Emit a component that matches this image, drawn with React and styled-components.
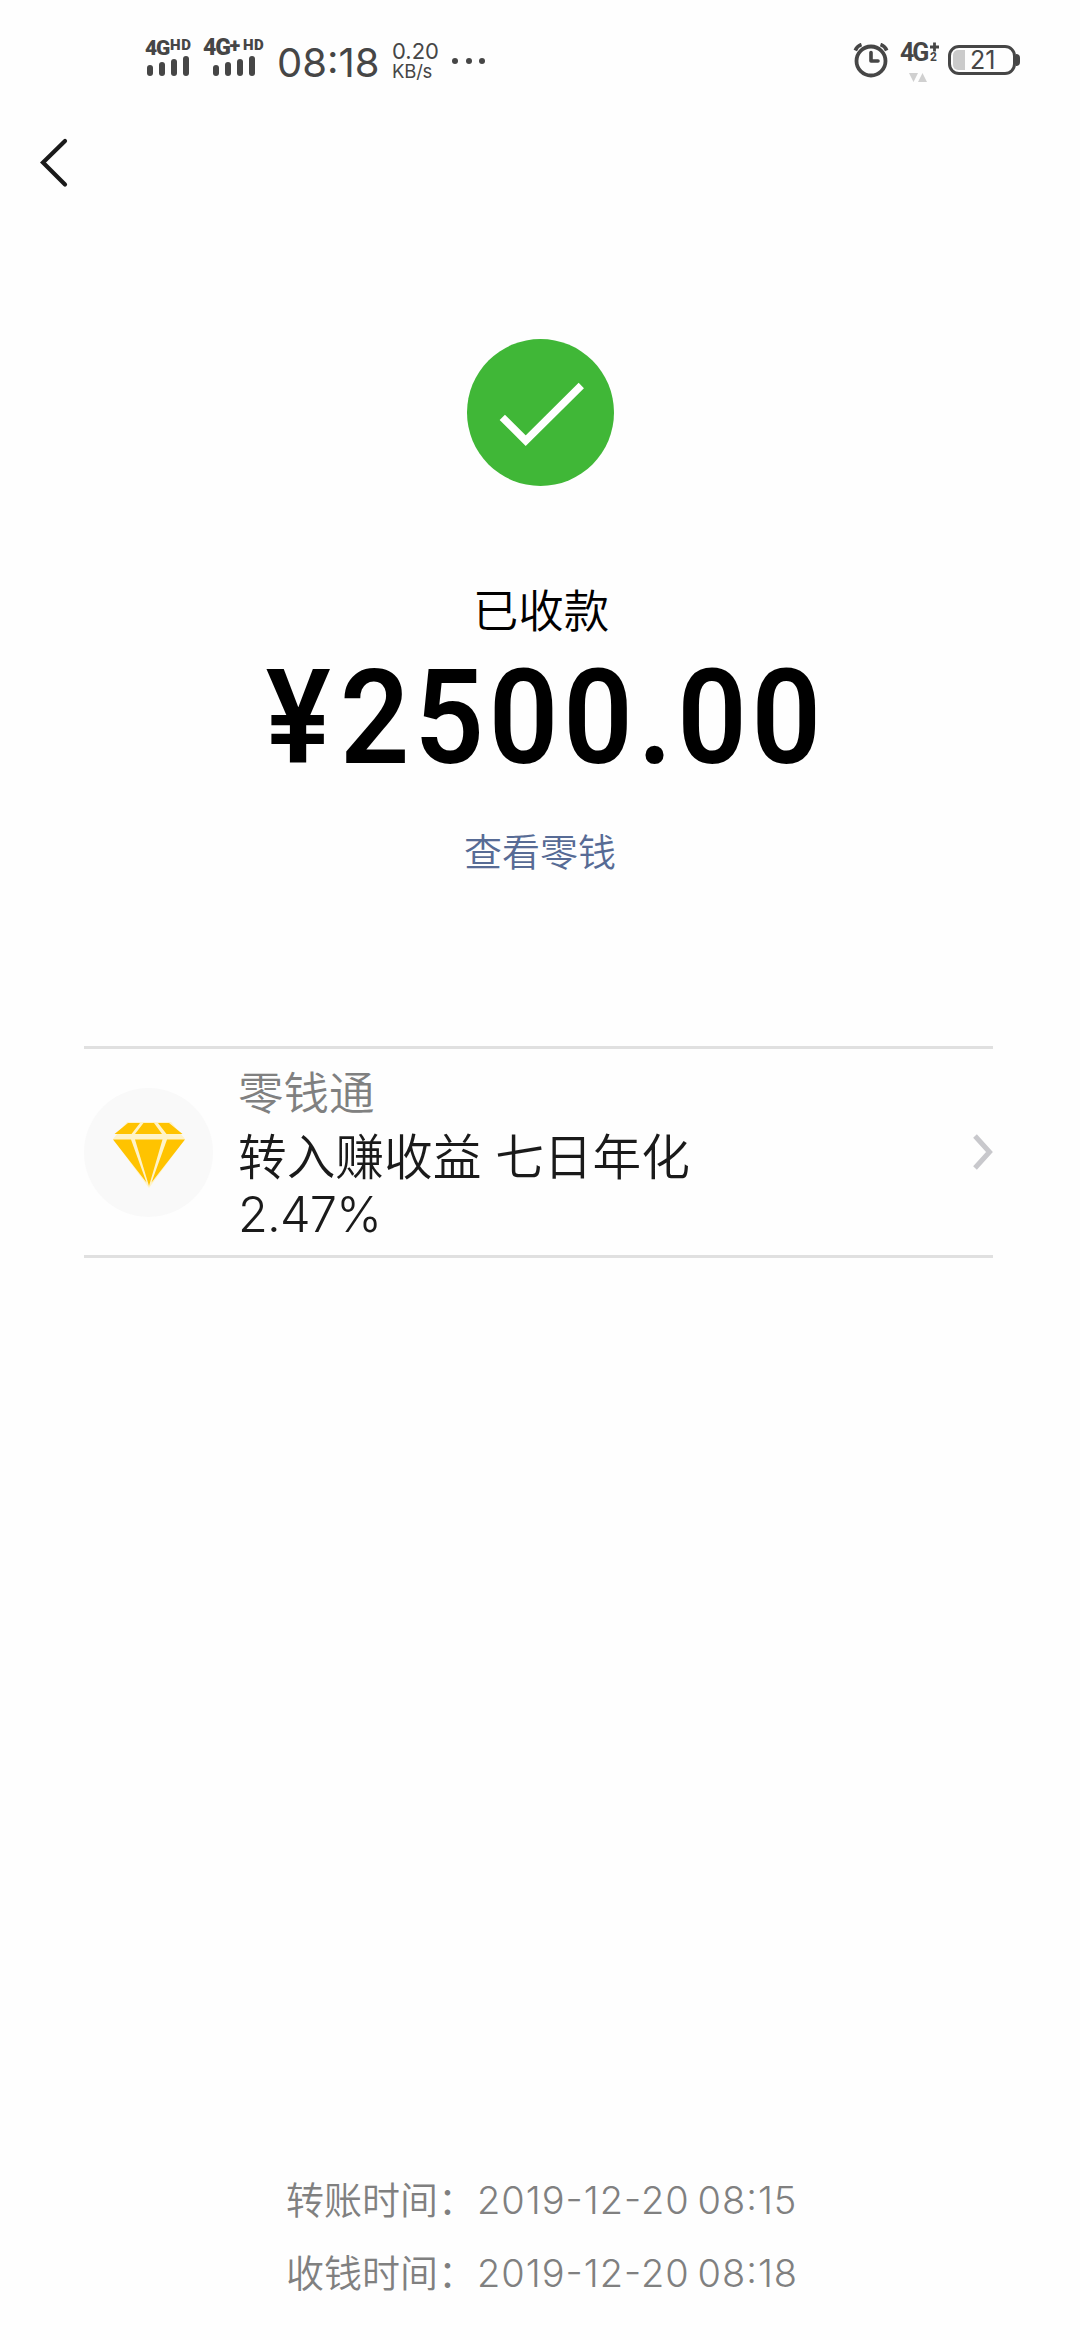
import styled, { createGlobalStyle } from "styled-components"

const GlobalStyle = createGlobalStyle`
    * {
        box-sizing: border-box;
    }
    body {
        margin: 0;
        background: #fefefe;
        font-family: Inter, "Noto Sans CJK SC", sans-serif;
        font-weight: 350;
    }
`

const Screen = styled.div`
    width: 1080px;
    height: 2340px;
    display: flex;
    flex-direction: column;
    background: #fefefe;
    overflow: hidden;
`

const StatusBar = styled.header`
    height: 120px;
    padding: 38px 60px 0 145px;
    display: flex;
    justify-content: space-between;
    color: #464646;
`

const StatusGroup = styled.div`
    display: flex;
    align-items: flex-start;
`

const Signal = styled.div`
    width: ${({width}) => width}px;
    height: 38px;
    display: flex;
    flex-direction: column;
    justify-content: space-between;
`

const NetworkLabel = styled.div`
    height: 18px;
    display: flex;
    align-items: flex-start;
    font-family: Roboto, sans-serif;
    font-weight: 900;
    font-size: ${({size}) => size || 21}px;
    line-height: 20px;
    letter-spacing: -1.2px;
    white-space: nowrap;
`

const NetworkBadge = styled.span`
    font-size: 15px;
    line-height: 14px;
    letter-spacing: 0.6px;
    margin-left: 1px;
`

const NetworkPlus = styled.span`
    font-size: 20px;
    line-height: 14px;
    letter-spacing: 1.6px;
`

const Bars = styled.div`
    display: flex;
    align-items: flex-end;
    gap: 6px;
    padding-left: ${({inset}) => inset}px;
`

const Bar = styled.span`
    width: 6px;
    height: ${({height}) => height}px;
    border-radius: 3px;
    background: #464646;
`

const Clock = styled.div`
    width: 114px;
    padding-top: 5px;
    font-size: 40px;
    font-weight: 400;
    line-height: 40px;
    letter-spacing: 0;
    text-indent: -1px;
`

const Speed = styled.div`
    width: 60px;
    padding-top: 3px;
    font-weight: 400;
    font-size: 22px;
    line-height: 20px;
`

const SpeedUnit = styled.div`
    font-size: 18.5px;
    line-height: 20px;
    letter-spacing: -0.2px;
`

const Dots = styled.div`
    display: flex;
    gap: 7.5px;
    padding-top: 20px;
`

const Dot = styled.span`
    width: 6px;
    height: 6px;
    border-radius: 50%;
    background: #464646;
`

const AlarmWrap = styled.div`
    padding-top: 5px;
`

const Mobile = styled.div`
    width: 59px;
    padding: 4px 0 0 11px;
`

const MobileLabel = styled.div`
    display: flex;
    height: 25px;
    font-family: Roboto, sans-serif;
    font-weight: 700;
    font-size: 25px;
    line-height: 22px;
    letter-spacing: -2.2px;
`

const PlusTwo = styled.div`
    display: flex;
    flex-direction: column;
    margin-left: 3px;
    font-size: 12px;
    line-height: 11px;
    letter-spacing: 0;
`

const BatteryWrap = styled.div`
    display: flex;
    align-items: center;
    padding-top: 7px;
`

const BatteryBody = styled.div`
    width: 68px;
    height: 30px;
    padding: 2px;
    display: flex;
    align-items: center;
    border: 3px solid #464646;
    border-radius: 11px;
    font-weight: 400;
    font-size: 25px;
    line-height: 24px;
`

const BatteryLevel = styled.span`
    width: 12px;
    height: 20px;
    margin-right: 5px;
    border-radius: 5px 0 0 5px;
    background: #cbcbcb;
`

const BatteryTip = styled.span`
    width: 4px;
    height: 12px;
    border-radius: 0 5px 5px 0;
    background: #464646;
`

const NavBar = styled.nav`
    height: 84px;
    padding: 17px 0 0 39px;
`

const Result = styled.main`
    height: 842px;
    padding-top: 135px;
    display: flex;
    flex-direction: column;
    align-items: center;
`

const ResultTitle = styled.h1`
    margin: 92px 0 0;
    padding-left: 2px;
    font-family: "Noto Sans CJK SC", sans-serif;
    font-size: 45.5px;
    font-weight: 350;
    line-height: 60px;
    color: #000;
`

const Amount = styled.div`
    margin-top: 20px;
    padding-left: 13px;
    font-family: Roboto, sans-serif;
    font-size: 131px;
    font-weight: 600;
    line-height: 120px;
    letter-spacing: 5.2px;
    color: #000;
    transform: scaleX(0.93);
`

const Currency = styled.span`
    letter-spacing: 10px;
`

const BalanceLink = styled.a`
    margin-top: 47px;
    font-family: "Noto Sans CJK SC", sans-serif;
    font-size: 38px;
    line-height: 50px;
    color: #576b95;
`

const Offer = styled.section`
    margin: 0 87px 0 84px;
    height: 212px;
    display: flex;
    align-items: center;
    border-top: 3px solid #e0e0e0;
    border-bottom: 3px solid #e0e0e0;
`

const OfferIcon = styled.div`
    width: 129px;
    height: 129px;
    padding-top: 6px;
    border-radius: 50%;
    background: #f9f9f9;
    display: flex;
    align-items: center;
    justify-content: center;
`

const OfferText = styled.div`
    margin-left: 25px;
    flex: 1;
`

const OfferName = styled.div`
    margin-bottom: 3px;
    font-size: 45.5px;
    line-height: 64px;
    color: #808080;
`

const OfferDetail = styled.div`
    width: 500px;
    font-size: 48.7px;
    line-height: 57px;
    color: #1a1a1a;
`

const Rate = styled.span`
    font-weight: 300;
    letter-spacing: -0.8px;
`

const Times = styled.footer`
    margin-top: auto;
    padding: 0 0 30px 286px;
`

const TimeRow = styled.div`
    height: 73px;
    display: flex;
    align-items: center;
    font-size: 38px;
    line-height: 73px;
    color: #808080;
    white-space: nowrap;
`

const TimeLabel = styled.span`
    width: 191px;
`

const TimeValue = styled.span`
    font-weight: 300;
    font-feature-settings: "case";
    letter-spacing: 1px;
    word-spacing: -4px;
`

const AlarmIcon = () => (
    <svg width="36" height="36" viewBox="853 43 36 36" fill="none" stroke="#464646">
        <circle cx="871" cy="61" r="14.5" strokeWidth="3.8" />
        <path d="M871 52.5v8.5h7" strokeWidth="3.6" strokeLinecap="round" strokeLinejoin="round" />
        <path d="M855.3 50.5a10 10 0 0 1 6.2-6M880.5 44.5a10 10 0 0 1 6.2 6" strokeWidth="3.6" />
    </svg>
)

const PlusIcon = () => (
    <svg width="9" height="10" viewBox="0 0 9 10" stroke="#464646" strokeWidth="2.8">
        <path d="M4.5 0.5v9M0 5h9" />
    </svg>
)

const TrafficIcon = () => (
    <svg width="28" height="10" viewBox="0 0 28 10" fill="#d0d0d0">
        <path d="M9 0h9l-4.500 9zM18 9h9l-4.500-9z" />
    </svg>
)

const BackIcon = () => (
    <svg width="30" height="52" viewBox="39 137 30 52" fill="none" stroke="#1a1a1a" strokeWidth="4.2" strokeLinecap="round">
        <path d="M65 141L43 162.500L65 184.500" />
    </svg>
)

const SuccessIcon = () => (
    <svg width="147" height="147" viewBox="0 0 147 147">
        <circle cx="73.500" cy="73.500" r="73.500" fill="#40b737" />
        <path d="M35.300 78.300L58.700 101.700L114.300 46.500" fill="none" stroke="#fff" strokeWidth="7.500" />
    </svg>
)

const DiamondIcon = () => (
    <svg width="72" height="66" viewBox="0 0 72 66">
        <path d="M14 0H58L72 17L36 66L0 17z" fill="#fff3c8" />
        <path
            d="M15 1H27L18.500 12H1.500zM30.500 1H41L49 12H22zM45 1H56L69.500 12H53.500zM0 17.500H18L33.500 60.500zM22 17.500H49.500L36 64zM54 17.500H72L38.500 60.500z"
            fill="#ffc300"
        />
    </svg>
)

const ChevronIcon = () => (
    <svg width="21" height="38" viewBox="972 1133 21 38" fill="none" stroke="#c8c8cc" strokeWidth="5">
        <path d="M975 1136L989.500 1152L975 1168" />
    </svg>
)

const times = [
    { label: "转账时间：", value: "2019-12-20 08:15" },
    { label: "收钱时间：", value: "2019-12-20 08:18" },
]

const SignalBars = ({inset}) => (
    <Bars inset={inset}>
        {[11, 14, 17, 20].map((height) => (
            <Bar key={height} height={height} />
        ))}
    </Bars>
)

const App = () => {
    return (
        <>
            <GlobalStyle />
            <Screen>
                <StatusBar>
                    <StatusGroup>
                        <Signal width={58}>
                            <NetworkLabel>
                                4G<NetworkBadge>HD</NetworkBadge>
                            </NetworkLabel>
                            <SignalBars inset={2} />
                        </Signal>
                        <Signal width={75}>
                            <NetworkLabel size={23}>
                                4G<NetworkPlus>+</NetworkPlus>
                                <NetworkBadge>HD</NetworkBadge>
                            </NetworkLabel>
                            <SignalBars inset={10} />
                        </Signal>
                        <Clock>08:18</Clock>
                        <Speed>
                            0.20
                            <SpeedUnit>KB/s</SpeedUnit>
                        </Speed>
                        <Dots>
                            <Dot />
                            <Dot />
                            <Dot />
                        </Dots>
                    </StatusGroup>
                    <StatusGroup>
                        <AlarmWrap>
                            <AlarmIcon />
                        </AlarmWrap>
                        <Mobile>
                            <MobileLabel>
                                4G
                                <PlusTwo>
                                    <PlusIcon />
                                    2
                                </PlusTwo>
                            </MobileLabel>
                            <TrafficIcon />
                        </Mobile>
                        <BatteryWrap>
                            <BatteryBody>
                                <BatteryLevel />
                                21
                            </BatteryBody>
                            <BatteryTip />
                        </BatteryWrap>
                    </StatusGroup>
                </StatusBar>
                <NavBar>
                    <BackIcon />
                </NavBar>
                <Result>
                    <SuccessIcon />
                    <ResultTitle>已收款</ResultTitle>
                    <Amount>
                        <Currency>¥</Currency>2500.00
                    </Amount>
                    <BalanceLink>查看零钱</BalanceLink>
                </Result>
                <Offer>
                    <OfferIcon>
                        <DiamondIcon />
                    </OfferIcon>
                    <OfferText>
                        <OfferName>零钱通</OfferName>
                        <OfferDetail>
                            转入赚收益 七日年化 <Rate>2.47%</Rate>
                        </OfferDetail>
                    </OfferText>
                    <ChevronIcon />
                </Offer>
                <Times>
                    {times.map(({ label, value }) => (
                        <TimeRow key={label}>
                            <TimeLabel>{label}</TimeLabel>
                            <TimeValue>{value}</TimeValue>
                        </TimeRow>
                    ))}
                </Times>
            </Screen>
        </>
    )
}

export default App
